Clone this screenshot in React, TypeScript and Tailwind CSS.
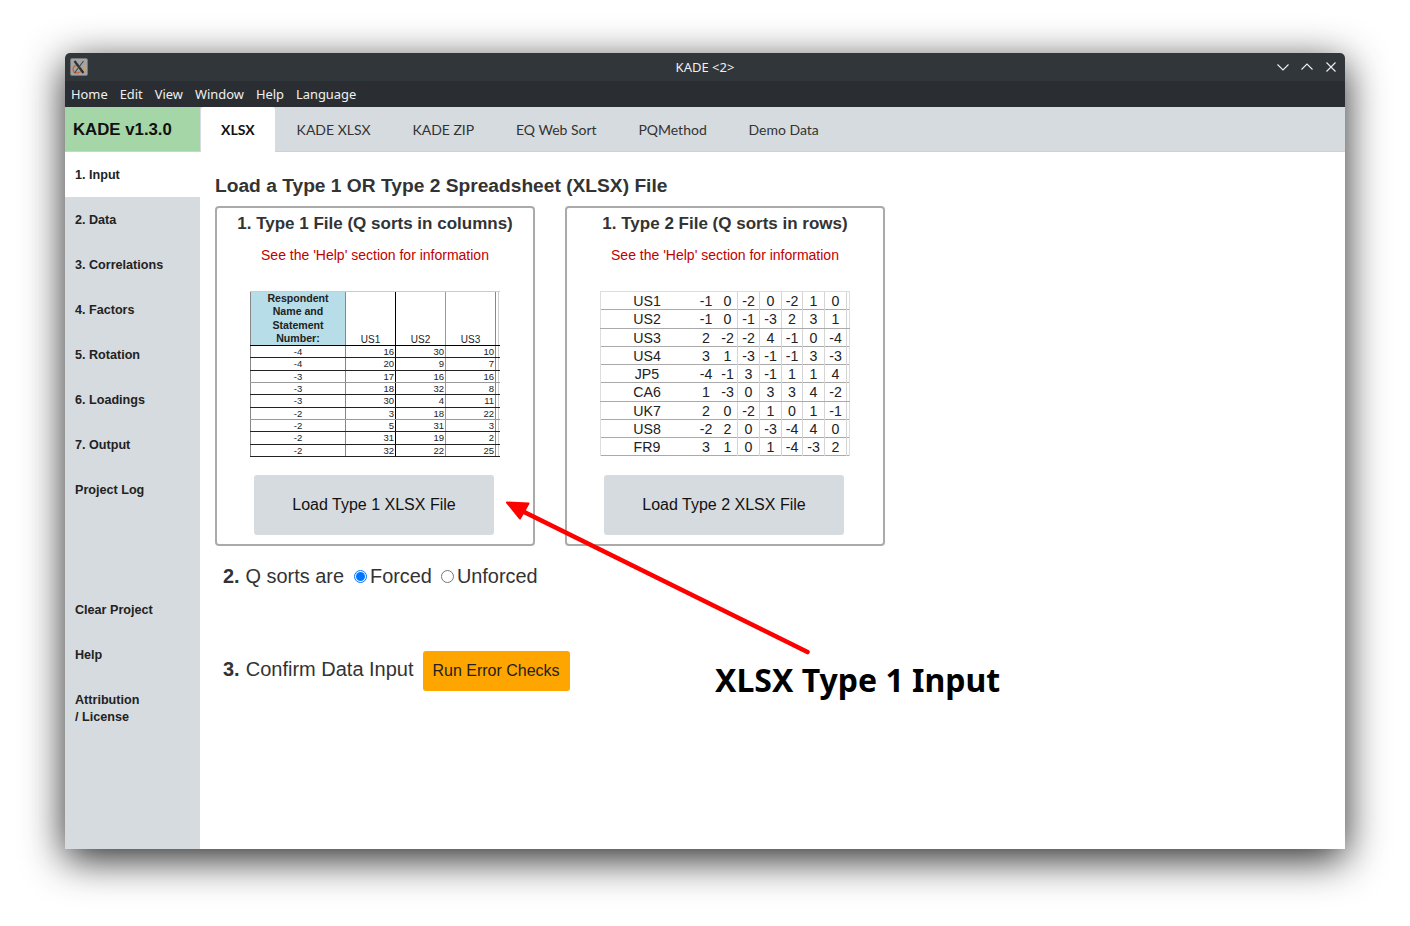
import React from 'react';

const menuItems = ['Home', 'Edit', 'View', 'Window', 'Help', 'Language'];
const tabs = ['XLSX', 'KADE XLSX', 'KADE ZIP', 'EQ Web Sort', 'PQMethod', 'Demo Data'];
const navTop = ['1. Input', '2. Data', '3. Correlations', '4. Factors', '5. Rotation', '6. Loadings', '7. Output', 'Project Log'];

const type1Rows = [
  ['-4', '16', '30', '10'],
  ['-4', '20', '9', '7'],
  ['-3', '17', '16', '16'],
  ['-3', '18', '32', '8'],
  ['-3', '30', '4', '11'],
  ['-2', '3', '18', '22'],
  ['-2', '5', '31', '3'],
  ['-2', '31', '19', '2'],
  ['-2', '32', '22', '25'],
];

const type2Rows = [
  ['US1', '-1', '0', '-2', '0', '-2', '1', '0'],
  ['US2', '-1', '0', '-1', '-3', '2', '3', '1'],
  ['US3', '2', '-2', '-2', '4', '-1', '0', '-4'],
  ['US4', '3', '1', '-3', '-1', '-1', '3', '-3'],
  ['JP5', '-4', '-1', '3', '-1', '1', '1', '4'],
  ['CA6', '1', '-3', '0', '3', '3', '4', '-2'],
  ['UK7', '2', '0', '-2', '1', '0', '1', '-1'],
  ['US8', '-2', '2', '0', '-3', '-4', '4', '0'],
  ['FR9', '3', '1', '0', '1', '-4', '-3', '2'],
];

const Type1Table = () => (
  <div className="w-[250px] h-[167px] font-['Liberation_Sans',sans-serif] text-[9.5px] leading-[11px] text-[#222]">
    <div className="grid grid-cols-[96px_50px_50px_50px_3px] grid-rows-[53px] h-[55px] border-t border-[#ccc] border-b border-b-black text-[10px]">
      <div className="bg-[#b7dde8] border-x border-[#888] flex flex-col items-center justify-around font-bold text-[10.6px] leading-[13px] overflow-hidden">
        <span>Respondent</span>
        <span>Name and</span>
        <span>Statement</span>
        <span>Number:</span>
      </div>
      <div className="border-r border-black flex items-end justify-center">US1</div>
      <div className="border-r border-[#999] flex items-end justify-center">US2</div>
      <div className="border-r border-[#888] flex items-end justify-center">US3</div>
      <div className="border-r border-[#ccc]" />
    </div>
    {type1Rows.map((row, i) => (
      <div
        key={i}
        className={`grid grid-cols-[96px_50px_50px_50px_3px] h-[12.35px] border-b ${i === 2 || i === 5 ? 'border-[#999]' : 'border-[#222]'}`}
      >
        <div className="border-x border-[#888] text-center">{row[0]}</div>
        <div className="border-r border-black text-right pr-[1px]">{row[1]}</div>
        <div className="border-r border-[#999] text-right pr-[1px]">{row[2]}</div>
        <div className="border-r border-[#888] text-right pr-[1px]">{row[3]}</div>
        <div className="border-r border-[#ccc]" />
      </div>
    ))}
  </div>
);

const Type2Table = () => (
  <div className="w-[250px] h-[167px] border-t border-[#ddd] font-['Liberation_Sans',sans-serif] text-[14.2px] leading-[18px] text-[#222]">
    {type2Rows.map((row) => (
      <div
        key={row[0]}
        className="grid grid-cols-[94px_24px_20px_22px_22px_21px_22px_22px_3px] h-[18.25px] border-b border-[#aaa]"
      >
        <div className="border-l border-[#ddd] pr-[1px] text-center">{row[0]}</div>
        {row.slice(1).map((v, j) => (
          <div key={j} className={`text-center ${j > 0 ? 'border-r border-[#d5d5d5]' : ''}`}>{v}</div>
        ))}
        <div className="border-r border-[#ddd]" />
      </div>
    ))}
  </div>
);

const FileCard = ({ title, label, children }: { title: string; label: string; children: React.ReactNode }) => (
  <div className="w-[320px] h-[340px] border-2 border-[#aaa] rounded-[4px] flex flex-col items-center">
    <h3 className="mt-[4px] h-[24px] text-[17px] leading-[24px] font-bold text-[#333]">{title}</h3>
    <p className="mt-[7px] h-[24px] text-[14px] leading-[24px] text-[#c00000]">See the 'Help' section for information</p>
    <div className="mt-[24px]">{children}</div>
    <button className="mt-[17px] mr-[2px] w-[240px] h-[60px] bg-[#d6dbdf] rounded-[3px] text-[16px] text-[#111]">{label}</button>
  </div>
);

const XLogo = () => (
  <div className="w-[18px] h-[18px] bg-[#a2a4a6] rounded-[2px] border border-[#777]">
    <svg viewBox="0 0 16 16" className="w-full h-full">
      <path d="M6 6 C1 7 0.5 14 6 14 C8 14 9.5 13 11 12" stroke="#d0662f" strokeWidth="1.4" fill="none" />
      <path d="M12.5 7 C14.5 9 14.5 12 12 13.5" stroke="#d9a050" strokeWidth="1.1" fill="none" />
      <path d="M3.5 2 L12.5 14" stroke="#2f2f2f" strokeWidth="2.2" fill="none" />
      <path d="M12.5 2 L3.5 14" stroke="#444" strokeWidth="1.1" fill="none" />
    </svg>
  </div>
);

export default function App() {
  return (
    <div className="h-[926px] w-[1410px] overflow-hidden bg-white pt-[53px] pl-[65px] font-['Liberation_Sans',sans-serif]">
      <div className="relative w-[1280px] h-[796px] flex flex-col bg-white rounded-t-[5px] shadow-[0_10px_40px_rgba(0,0,0,0.85)]">
        {/* Title bar */}
        <div className="h-[28px] bg-[#31363b] rounded-t-[5px] flex items-center justify-between pl-[5px] pr-[8px] relative">
          <XLogo />
          <span className="absolute left-0 right-0 top-[5px] text-center text-[13px] leading-[18px] text-[#eff0f1] font-['Noto_Sans',sans-serif]">KADE &lt;2&gt;</span>
          <div className="flex items-center gap-[12px] text-[#eff0f1]">
            <svg width="12" height="12" viewBox="0 0 12 12" fill="none" stroke="currentColor" strokeWidth="1.1"><path d="M0.5 3.5 L6 9 L11.5 3.5" /></svg>
            <svg width="12" height="12" viewBox="0 0 12 12" fill="none" stroke="currentColor" strokeWidth="1.1"><path d="M0.5 8.5 L6 3 L11.5 8.5" /></svg>
            <svg width="12" height="12" viewBox="0 0 12 12" fill="none" stroke="currentColor" strokeWidth="1.1"><path d="M1.5 1.5 L10.5 10.5 M10.5 1.5 L1.5 10.5" /></svg>
          </div>
        </div>

        {/* Menu bar */}
        <div className="h-[26px] bg-[#2a2e32] flex items-center gap-[12px] pl-[6px] pt-[2px] text-[12.9px] text-[#eff0f1] font-['Noto_Sans',sans-serif]">
          {menuItems.map((m) => (
            <span key={m}>{m}</span>
          ))}
        </div>

        {/* Tab row */}
        <div className="h-[45px] bg-[#d6dbdf] flex border-b border-[#ccd1d5]">
          <div className="w-[135px] bg-[#a5d6a7] flex items-center pl-[8px] pt-[2px] text-[16.8px] font-bold text-[#111]">KADE v1.3.0</div>
          <div className="flex pl-[1px] font-['Lato',sans-serif] text-[14px]">
            {tabs.map((t, i) => (
              <div
                key={t}
                className={
                  i === 0
                    ? 'h-[45px] px-[20px] mr-[1px] bg-white rounded-t-[3px] flex items-center font-bold text-[#111]'
                    : 'h-[44px] px-[20.9px] pt-[1px] flex items-center text-[#333]'
                }
              >
                {t}
              </div>
            ))}
          </div>
        </div>

        <div className="flex-1 flex">
          {/* Sidebar */}
          <aside className="w-[135px] bg-[#d6dbdf] text-[12.6px] font-bold text-[#222]">
            {navTop.map((n, i) => (
              <div key={n} className={`h-[45px] flex items-center pl-[10px] pt-[2px] ${i === 0 ? 'bg-white' : ''}`}>{n}</div>
            ))}
            <div className="h-[45px] mt-[75px] flex items-center pl-[10px] pt-[2px]">Clear Project</div>
            <div className="h-[45px] flex items-center pl-[10px] pt-[2px]">Help</div>
            <div className="pl-[10px] pt-[15px] leading-[17px]">
              Attribution
              <br />/ License
            </div>
          </aside>

          {/* Main */}
          <main className="flex-1 pl-[15px] text-[#333]">
            <h2 className="mt-[22px] h-[24px] text-[19.2px] leading-[24px] font-bold">Load a Type 1 OR Type 2 Spreadsheet (XLSX) File</h2>
            <div className="mt-[8px] flex gap-[30px]">
              <FileCard title="1. Type 1 File (Q sorts in columns)" label="Load Type 1 XLSX File">
                <Type1Table />
              </FileCard>
              <FileCard title="1. Type 2 File (Q sorts in rows)" label="Load Type 2 XLSX File">
                <Type2Table />
              </FileCard>
            </div>
            <div className="mt-[18px] ml-[8px] h-[24px] flex items-center text-[19.9px] leading-[24px]">
              <b>2.</b>
              <span className="ml-[6px]">Q sorts are</span>
              <span className="ml-[10px] w-[13px] h-[13px] rounded-full border border-[#0075ff] bg-white flex items-center justify-center">
                <span className="w-[9px] h-[9px] rounded-full bg-[#0075ff]" />
              </span>
              <span className="ml-[3px]">Forced</span>
              <span className="ml-[9px] w-[13px] h-[13px] rounded-full border border-[#767676] bg-white" />
              <span className="ml-[3px]">Unforced</span>
            </div>
            <div className="mt-[63px] ml-[8px] h-[40px] flex items-center text-[20px] leading-[24px]">
              <b className="mb-[4px]">3.</b>
              <span className="ml-[6px] mb-[4px]">Confirm Data Input</span>
              <button className="ml-[9px] w-[147px] h-[40px] bg-[#ffa500] rounded-[3px] text-[16px] text-[#222]">Run Error Checks</button>
            </div>
          </main>
        </div>

        {/* Annotation */}
        <svg className="absolute left-[430px] top-[435px] pointer-events-none" width="330" height="175" viewBox="0 0 330 175" fill="none">
          <path d="M312.5 164 L25 22" stroke="#ff0000" strokeWidth="4.6" strokeLinecap="round" />
          <path d="M12 14.5 L33.5 15.5 L25 30.5 Z" fill="#ff0000" stroke="#ff0000" strokeWidth="2" strokeLinejoin="round" />
        </svg>
        <span className="absolute left-[650px] top-[605px] text-[32px] leading-[44px] font-bold text-black font-['Noto_Sans',sans-serif] whitespace-nowrap">XLSX Type 1 Input</span>
      </div>
    </div>
  );
}
